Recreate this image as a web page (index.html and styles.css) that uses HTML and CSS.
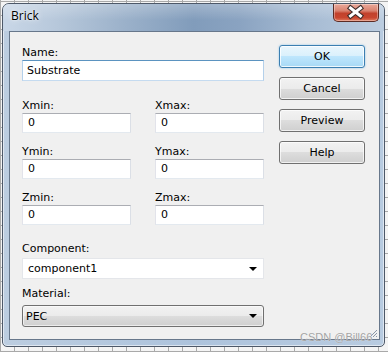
FILE: index.html
```html
<!DOCTYPE html>
<html lang="en">
<head>
    <meta charset="UTF-8">
    <title>Brick</title>
    <link rel="stylesheet" href="styles.css">
</head>
<body>
    <div class="window">
        <div class="titlebar">
            <span class="title">Brick</span>
            <div class="close-btn">
                <!-- white cross with dark outline -->
                <svg width="46" height="18" viewBox="0 0 46 18">
                    <path d="M17.5 5 L27.5 13 M27.5 5 L17.5 13" stroke="#3a2a28" stroke-width="5" stroke-linecap="square"/>
                    <path d="M17.5 5 L27.5 13 M27.5 5 L17.5 13" stroke="#ffffff" stroke-width="3" stroke-linecap="square"/>
                </svg>
            </div>
        </div>
        <div class="client">
            <div class="form">
                <div class="label">Name:</div>
                <div class="textbox textbox-focus">Substrate</div>

                <div class="pairs">
                    <div class="field">
                        <div class="label">Xmin:</div>
                        <div class="textbox">0</div>
                    </div>
                    <div class="field">
                        <div class="label">Xmax:</div>
                        <div class="textbox">0</div>
                    </div>
                    <div class="field">
                        <div class="label">Ymin:</div>
                        <div class="textbox">0</div>
                    </div>
                    <div class="field">
                        <div class="label">Ymax:</div>
                        <div class="textbox">0</div>
                    </div>
                    <div class="field">
                        <div class="label">Zmin:</div>
                        <div class="textbox">0</div>
                    </div>
                    <div class="field">
                        <div class="label">Zmax:</div>
                        <div class="textbox">0</div>
                    </div>
                </div>

                <div class="label label-component">Component:</div>
                <div class="combo combo-edit">
                    <span>component1</span>
                    <span class="arrow"></span>
                </div>

                <div class="label label-material">Material:</div>
                <div class="combo combo-list">
                    <span>PEC</span>
                    <span class="arrow"></span>
                </div>
            </div>
            <div class="buttons">
                <div class="btn btn-default">OK</div>
                <div class="btn">Cancel</div>
                <div class="btn">Preview</div>
                <div class="btn">Help</div>
            </div>
            <!-- size grip in the corner -->
            <svg class="grip" width="10" height="10" viewBox="0 0 10 10">
                <path d="M9 2 L2 9 M9 5 L5 9 M9 8 L8 9" stroke="#8a96a6" stroke-width="1"/>
            </svg>
        </div>
    </div>
    <div class="watermark">CSDN @Bill66</div>
</body>
</html>
```

FILE: styles.css
```css
body {
    margin: 0;
    width: 388px;
    height: 352px;
    overflow: hidden;
    position: relative;
    font-family: "DejaVu Sans", sans-serif;
    font-size: 11px;
    color: #000;
    background-color: #f4f4f4;
    background-image:
        repeating-linear-gradient(90deg, #a9a9a9 0, #a9a9a9 1px, transparent 1px, transparent 14px),
        repeating-linear-gradient(0deg, #a9a9a9 0, #a9a9a9 1px, transparent 1px, transparent 14px);
}
.window {
    position: relative;
    margin: 3px 0 0 2px;
    width: 383px;
    height: 344px;
    box-sizing: border-box;
    border: 1px solid #4d5868;
    border-radius: 7px 7px 5px 5px;
    background: linear-gradient(90deg, #bccde0 0%, #adc3dc 50%, #b8cbe0 100%);
    box-shadow: inset 0 0 0 1px rgba(255, 255, 255, 0.55);
    display: flex;
    flex-direction: column;
}
.titlebar {
    height: 27px;
    display: flex;
    justify-content: space-between;
    align-items: flex-start;
    padding-left: 8px;
    border-radius: 6px 6px 0 0;
    background:
        linear-gradient(180deg, rgba(255, 255, 255, 0.25) 0%, rgba(255, 255, 255, 0) 60%),
        linear-gradient(90deg, #c9d7e7 0%, #b7c8db 14%, #9bb1ca 32%, #819cbb 50%, #8aa3c1 62%, #a6bbd3 80%, #bccde0 100%);
}
.title {
    font-family: "Open Sans", sans-serif;
    font-size: 12px;
    line-height: 16px;
    padding-top: 4px;
    text-shadow: 0 0 6px rgba(255, 255, 255, 0.9), 0 0 2px rgba(255, 255, 255, 0.8);
}
.close-btn {
    width: 46px;
    height: 18px;
    margin-right: 5px;
    box-sizing: border-box;
    border: 1px solid #5b2b24;
    border-top: none;
    border-radius: 0 0 5px 5px;
    background: linear-gradient(180deg, #e9a99a 0%, #d9826f 40%, #c2412c 55%, #c8462f 80%, #e07a5e 100%);
    box-shadow: inset 0 0 0 1px rgba(255, 255, 255, 0.35);
}
.close-btn svg {
    display: block;
    margin: -1px 0 0 -1px;
}
.client {
    position: relative;
    flex: 1;
    margin: 0 4px 6px 6px;
    box-sizing: border-box;
    border: 1px solid #67778b;
    background-color: #f0f0f0;
    padding: 13px 0 0 12px;
    display: flex;
    align-items: flex-start;
}
.form {
    width: 242px;
}
.label {
    height: 15px;
    line-height: 15px;
    white-space: nowrap;
}
.textbox {
    height: 20px;
    box-sizing: border-box;
    border: 1px solid;
    border-color: #abadb3 #dbdfe6 #e3e9ef #e2e3ea;
    background-color: #fff;
    padding: 0 5px;
    line-height: 18px;
}
.textbox-focus {
    height: 21px;
    line-height: 19px;
    padding: 0 4px;
    border-color: #5b93c0 #b4d0ea #c5dbf0 #b4d0ea;
}
.pairs {
    margin-top: 17px;
    display: grid;
    grid-template-columns: 109px 109px;
    column-gap: 24px;
    row-gap: 11px;
}
.label-component {
    margin-top: 16px;
}
.label-material {
    margin-top: 7px;
}
.combo {
    box-sizing: border-box;
    display: flex;
    justify-content: space-between;
    align-items: center;
    padding: 0 5px 0 5px;
}
.combo-edit {
    height: 21px;
    margin-top: 2px;
    background-color: #fff;
    border: 1px solid #e4e6ea;
}
.combo-list {
    height: 22px;
    margin-top: 4px;
    padding-left: 3px;
    border: 1px solid #707070;
    border-radius: 3px;
    background: linear-gradient(180deg, #f2f2f2 0%, #ebebeb 50%, #dddddd 50%, #cfcfcf 100%);
    box-shadow: inset 0 0 0 1px rgba(255, 255, 255, 0.6);
}
.arrow {
    width: 0;
    height: 0;
    margin-right: 1px;
    border-left: 4px solid transparent;
    border-right: 4px solid transparent;
    border-top: 4px solid #000;
}
.buttons {
    margin-left: 15px;
    width: 86px;
    display: flex;
    flex-direction: column;
    gap: 9px;
}
.btn {
    height: 23px;
    box-sizing: border-box;
    border: 1px solid #707070;
    border-radius: 3px;
    background: linear-gradient(180deg, #f2f2f2 0%, #ebebeb 50%, #dddddd 50%, #cfcfcf 100%);
    box-shadow: inset 0 0 0 1px rgba(255, 255, 255, 0.7);
    text-align: center;
    line-height: 21px;
}
.btn-default {
    border-color: #3c7fb1;
    background: linear-gradient(180deg, #eaf6fd 0%, #d9f0fc 50%, #bee6fd 50%, #a7d9f5 100%);
    box-shadow: inset 0 0 0 1px rgba(255, 255, 255, 0.8), 0 0 2px rgba(60, 160, 230, 0.6);
}
.grip {
    position: absolute;
    right: 1px;
    bottom: 1px;
}
.watermark {
    position: absolute;
    left: 300px;
    top: 331px;
    font-family: "Liberation Sans", sans-serif;
    font-size: 11px;
    color: #a3a3a3;
    text-shadow: 0 0 1px rgba(255, 255, 255, 0.8);
}
```
